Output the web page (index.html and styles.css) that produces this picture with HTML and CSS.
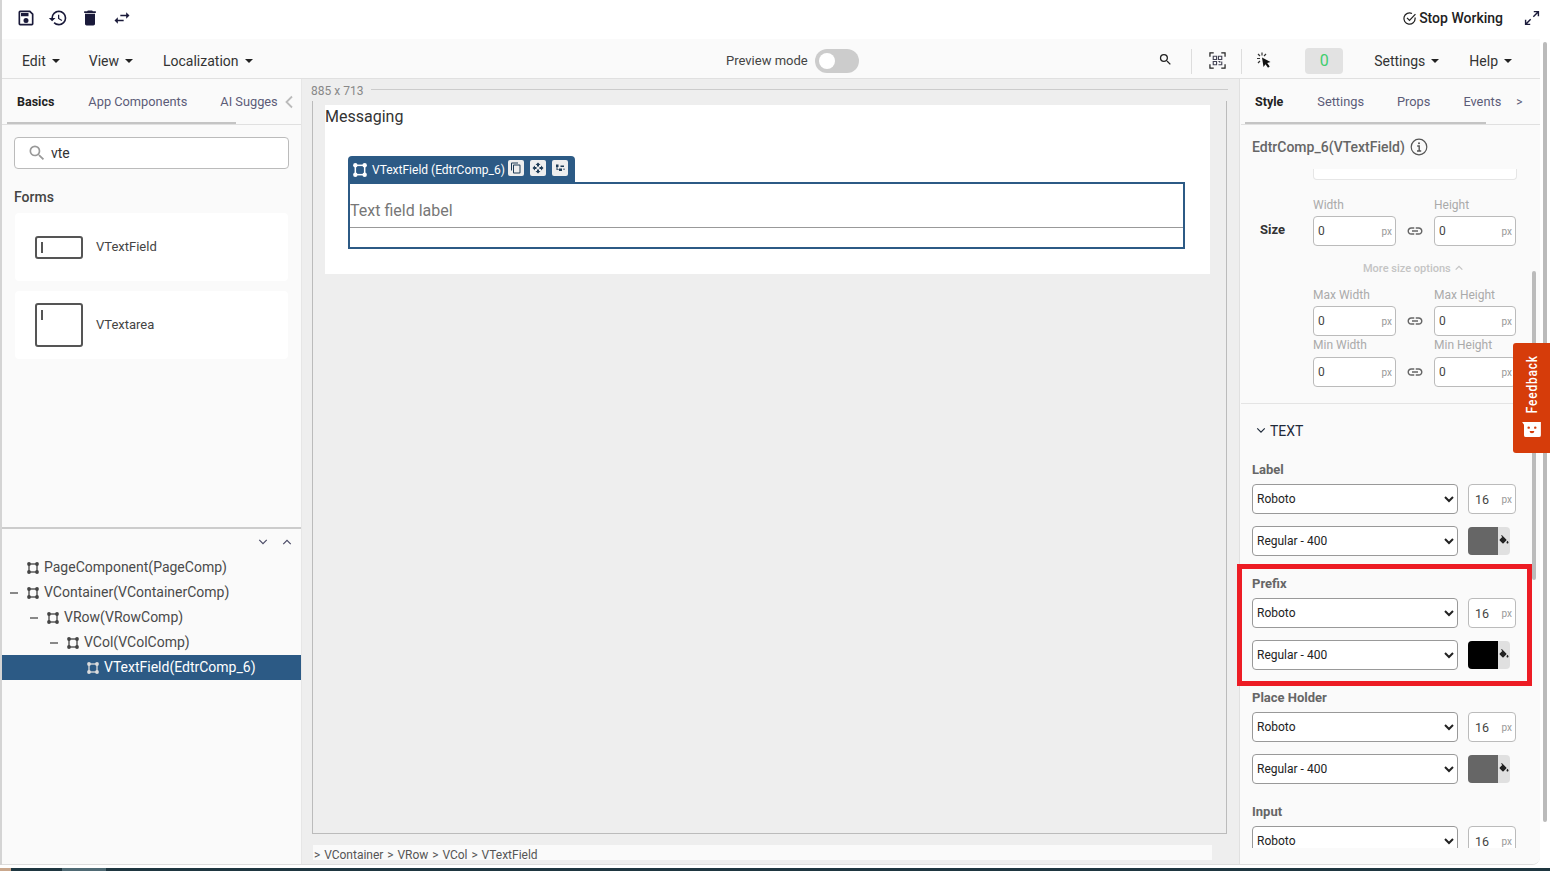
FILE: index.html
```html
<!DOCTYPE html>
<html lang="en">
<head>
  <meta charset="UTF-8" />
  <meta name="viewport" content="width=device-width, initial-scale=1.0"/>
  <title>Page Editor</title>
  <link rel="stylesheet" href="styles.css">
</head>
<body>
  <svg class="defs" width="0" height="0">
    <symbol id="i-node" viewBox="0 0 12 12">
      <rect x="2" y="2" width="8" height="8" fill="none" stroke="currentColor" stroke-width="1.300"/>
      <circle cx="2" cy="2" r="1.900" fill="currentColor"/>
      <circle cx="10" cy="2" r="1.900" fill="currentColor"/>
      <circle cx="2" cy="10" r="1.900" fill="currentColor"/>
      <circle cx="10" cy="10" r="1.900" fill="currentColor"/>
    </symbol>
    <symbol id="i-link" viewBox="0 0 24 24">
      <path fill="currentColor" d="M3.9 12c0-1.71 1.39-3.1 3.1-3.1h4V7H7c-2.76 0-5 2.24-5 5s2.24 5 5 5h4v-1.9H7c-1.71 0-3.1-1.39-3.1-3.1zM8 13h8v-2H8v2zm9-6h-4v1.9h4c1.71 0 3.1 1.39 3.1 3.1s-1.39 3.1-3.1 3.1h-4V17h4c2.76 0 5-2.24 5-5s-2.24-5-5-5z"/>
    </symbol>
    <symbol id="i-fill" viewBox="0 0 24 24">
      <path fill="currentColor" d="M16.56 8.94L7.62 0 6.21 1.41l2.38 2.38-5.15 5.15c-.59.59-.59 1.54 0 2.12l5.5 5.5c.29.29.68.44 1.06.44s.77-.15 1.06-.44l5.5-5.5c.59-.58.59-1.53 0-2.12zM19 11.5s-2 2.17-2 3.5c0 1.1.9 2 2 2s2-.9 2-2c0-1.33-2-3.5-2-3.5z"/>
    </symbol>
  </svg>

  <div class="app">
    <!-- Top actions -->
    <div class="topbar">
      <div class="top-icons">
        <svg viewBox="0 0 24 24"><path fill="currentColor" d="M17 3H5a2 2 0 0 0-2 2v14a2 2 0 0 0 2 2h14a2 2 0 0 0 2-2V7l-4-4zm2 16H5V5h11.17L19 7.83V19zm-7-7a3 3 0 1 0 0 6 3 3 0 0 0 0-6zM6 6h9v4H6z"/></svg>
        <svg viewBox="0 0 24 24"><path fill="currentColor" d="M13 3a9 9 0 0 0-9 9H1l3.89 3.89.07.14L9 12H6c0-3.87 3.13-7 7-7s7 3.13 7 7-3.13 7-7 7c-1.93 0-3.68-.79-4.94-2.06l-1.42 1.42A8.954 8.954 0 0 0 13 21a9 9 0 0 0 0-18zm-1 5v5l4.28 2.54.72-1.21-3.5-2.08V8H12z"/></svg>
        <svg viewBox="0 0 24 24"><path fill="currentColor" d="M6 19c0 1.1.9 2 2 2h8c1.1 0 2-.9 2-2V7H6v12zM19 4h-3.5l-1-1h-5l-1 1H5v2h14V4z"/></svg>
        <svg viewBox="0 0 24 24"><path fill="currentColor" d="M6.99 11L3 15l3.99 4v-3H14v-2H6.99v-3zM21 9l-3.99-4v3H10v2h7.01v3L21 9z"/></svg>
      </div>
      <div class="top-right">
        <svg class="check-icon" viewBox="0 0 24 24"><path fill="none" stroke="currentColor" stroke-width="2" d="M21 10.5V12a9 9 0 1 1-5-8"/><path fill="none" stroke="currentColor" stroke-width="2" d="M8 11l4 4 9.500-10"/></svg>
        <span class="stop-working">Stop Working</span>
        <svg class="expand-icon" viewBox="0 0 18 18"><path fill="none" stroke="currentColor" stroke-width="1.600" d="M10.500 7.500L16 2M11 1.800h5.200V7M7.500 10.500L2 16M7 16.200H1.800V11"/></svg>
      </div>
    </div>

    <!-- Menu -->
    <div class="menubar">
      <div class="menu-left">
        <span class="menu-item">Edit</span>
        <span class="menu-item">View</span>
        <span class="menu-item">Localization</span>
      </div>
      <div class="preview">
        <span>Preview mode</span>
        <div class="toggle"><div class="knob"></div></div>
      </div>
      <div class="menu-right">
        <svg class="tool-search" viewBox="0 0 24 24"><path fill="currentColor" d="M15.5 14h-.79l-.28-.27A6.471 6.471 0 0 0 16 9.500 6.500 6.500 0 1 0 9.500 16c1.610 0 3.090-.59 4.230-1.570l.27.28v.79l5 4.990L20.490 19l-4.990-5zm-6 0C7.010 14 5 11.990 5 9.500S7.010 5 9.500 5 14 7.010 14 9.500 11.990 14 9.500 14z"/></svg>
        <div class="tool-sep"></div>
        <svg class="tool-qr" viewBox="0 0 18 18">
          <path fill="none" stroke="#222" stroke-width="1.300" d="M1 5V1h4M13 1h4v4M17 13v4h-4M5 17H1v-4"/>
          <path fill="none" stroke="#445" stroke-width="1.200" d="M4.500 4.500h3.500v3.500H4.500zM10 4.500h3.500v3.500H10zM4.500 10h3.500v3.500H4.500zM10 10h1.500v1.500M13.500 10v3.500H10"/>
        </svg>
        <div class="tool-sep"></div>
        <svg class="tool-click" viewBox="0 0 14 16">
          <path fill="none" stroke="#333" stroke-width="1.200" d="M5 0.500v3M1 2l2 2M0 6.500h3M9 2L7 4M1 11l2-2"/>
          <path fill="#111" d="M5 5.500l8.500 4.500-3.300 1 2.500 3.500-1.700 1.300-2.500-3.500L6.500 15z"/>
        </svg>
        <div class="counter">0</div>
        <span class="menu-item">Settings</span>
        <span class="menu-item">Help</span>
      </div>
    </div>

    <div class="main">
      <!-- Component palette and tree -->
      <aside class="left-panel">
        <div class="palette">
          <div class="tabs">
            <span class="tab active">Basics</span>
            <span class="tab tab-app">App Components</span>
            <span class="tab tab-ai">AI Sugges</span>
            <svg class="tab-back" viewBox="0 0 10 14"><path fill="none" stroke="currentColor" stroke-width="1.800" d="M8 1.500L2.500 7 8 12.500"/></svg>
          </div>
          <div class="search">
            <svg viewBox="0 0 24 24"><path fill="currentColor" d="M15.5 14h-.79l-.28-.27A6.471 6.471 0 0 0 16 9.500 6.500 6.500 0 1 0 9.500 16c1.610 0 3.090-.59 4.230-1.570l.27.28v.79l5 4.990L20.490 19l-4.990-5zm-6 0C7.010 14 5 11.990 5 9.500S7.010 5 9.500 5 14 7.010 14 9.500 11.990 14 9.500 14z"/></svg>
            <span>vte</span>
          </div>
          <div class="group-title">Forms</div>
          <div class="comp-card">
            <div class="comp-icon small"></div>
            <span>VTextField</span>
          </div>
          <div class="comp-card">
            <div class="comp-icon tall"></div>
            <span>VTextarea</span>
          </div>
        </div>

        <div class="tree">
          <div class="tree-tools">
            <svg viewBox="0 0 12 8"><path fill="none" stroke="currentColor" stroke-width="1.400" d="M1.500 1.500L6 6l4.500-4.500"/></svg>
            <svg viewBox="0 0 12 8"><path fill="none" stroke="currentColor" stroke-width="1.400" d="M1.500 6.500L6 2l4.500 4.500"/></svg>
          </div>
          <div class="tree-row depth-0"><i class="minus none"></i><svg class="node"><use href="#i-node"/></svg><span>PageComponent(PageComp)</span></div>
          <div class="tree-row depth-0"><i class="minus"></i><svg class="node"><use href="#i-node"/></svg><span>VContainer(VContainerComp)</span></div>
          <div class="tree-row depth-1"><i class="minus"></i><svg class="node"><use href="#i-node"/></svg><span>VRow(VRowComp)</span></div>
          <div class="tree-row depth-2"><i class="minus"></i><svg class="node"><use href="#i-node"/></svg><span>VCol(VColComp)</span></div>
          <div class="tree-row depth-3 selected"><i class="minus none"></i><svg class="node"><use href="#i-node"/></svg><span>VTextField(EdtrComp_6)</span></div>
        </div>
      </aside>

      <!-- Canvas -->
      <section class="center">
        <div class="dims"><span>885 x 713</span><div class="dims-line"></div></div>
        <div class="frame">
          <div class="page">
            <div class="page-title">Messaging</div>
            <div class="sel-tab">
              <svg class="node"><use href="#i-node"/></svg>
              <span>VTextField (EdtrComp_6)</span>
              <div class="sel-btn"><svg viewBox="0 0 24 24"><path fill="currentColor" d="M16 1H4a2 2 0 0 0-2 2v14h2V3h12V1zm3 4H8a2 2 0 0 0-2 2v14a2 2 0 0 0 2 2h11a2 2 0 0 0 2-2V7a2 2 0 0 0-2-2zm0 16H8V7h11v14z"/></svg></div>
              <div class="sel-btn"><svg viewBox="0 0 24 24"><path fill="currentColor" d="M10 9h4V6h3l-5-5-5 5h3v3zm-1 1H6V7l-5 5 5 5v-3h3v-4zm14 2l-5-5v3h-3v4h3v3l5-5zm-9 3h-4v3H7l5 5 5-5h-3v-3z"/></svg></div>
              <div class="sel-btn"><svg viewBox="0 0 24 24"><path fill="currentColor" d="M4 5h5v5H7v5h3v-2h6v5h-6v-2H5V10H4zM13 7h7v3h-7zM19 13h2v3h-2z"/></svg></div>
            </div>
            <div class="sel-box">
              <div class="field-label">Text field label</div>
            </div>
          </div>
        </div>
        <div class="crumbs">&gt; VContainer &gt; VRow &gt; VCol &gt; VTextField</div>
      </section>

      <!-- Properties -->
      <aside class="right-panel">
        <div class="tabs right-tabs">
          <span class="tab active">Style</span>
          <span class="tab">Settings</span>
          <span class="tab">Props</span>
          <span class="tab">Events</span>
          <span class="tab tab-more">&gt;</span>
        </div>
        <div class="comp-title">
          <span>EdtrComp_6(VTextField)</span>
          <svg viewBox="0 0 18 18"><circle cx="9" cy="9" r="7.800" fill="none" stroke="currentColor" stroke-width="1.200"/><path fill="none" stroke="currentColor" stroke-width="1.400" d="M7.200 8h2v5M7 13h4.200"/><circle cx="9" cy="5.300" r="1" fill="currentColor"/></svg>
        </div>
        <div class="prop-scroll">
          <div class="cut-box"></div>

          <div class="size-labels first"><span>Width</span><span>Height</span></div>
          <div class="size-row">
            <span class="size-title">Size</span>
            <div class="num"><span>0</span><small>px</small></div>
            <svg class="link"><use href="#i-link"/></svg>
            <div class="num"><span>0</span><small>px</small></div>
          </div>
          <div class="more-size">More size options
            <svg viewBox="0 0 12 8"><path fill="none" stroke="currentColor" stroke-width="1.500" d="M2 6l4-4 4 4"/></svg>
          </div>
          <div class="size-labels"><span>Max Width</span><span>Max Height</span></div>
          <div class="size-row">
            <div class="num"><span>0</span><small>px</small></div>
            <svg class="link"><use href="#i-link"/></svg>
            <div class="num"><span>0</span><small>px</small></div>
          </div>
          <div class="size-labels min"><span>Min Width</span><span>Min Height</span></div>
          <div class="size-row">
            <div class="num"><span>0</span><small>px</small></div>
            <svg class="link"><use href="#i-link"/></svg>
            <div class="num"><span>0</span><small>px</small></div>
          </div>

          <div class="section-head">
            <svg viewBox="0 0 12 8"><path fill="none" stroke="currentColor" stroke-width="1.400" d="M1.500 1.500L6 6l4.500-4.500"/></svg>
            <span>TEXT</span>
          </div>

          <div class="font-group">
            <div class="font-label">Label</div>
            <div class="font-row">
              <select><option>Roboto</option></select>
              <div class="num short"><span>16</span><small>px</small></div>
            </div>
            <div class="font-row">
              <select><option>Regular - 400</option></select>
              <div class="swatch"><div class="chip grey"></div><svg><use href="#i-fill"/></svg></div>
            </div>
          </div>
          <div class="font-group">
            <div class="font-label">Prefix</div>
            <div class="font-row">
              <select><option>Roboto</option></select>
              <div class="num short"><span>16</span><small>px</small></div>
            </div>
            <div class="font-row">
              <select><option>Regular - 400</option></select>
              <div class="swatch"><div class="chip black"></div><svg><use href="#i-fill"/></svg></div>
            </div>
          </div>
          <div class="font-group">
            <div class="font-label">Place Holder</div>
            <div class="font-row">
              <select><option>Roboto</option></select>
              <div class="num short"><span>16</span><small>px</small></div>
            </div>
            <div class="font-row">
              <select><option>Regular - 400</option></select>
              <div class="swatch"><div class="chip grey"></div><svg><use href="#i-fill"/></svg></div>
            </div>
          </div>
          <div class="font-group">
            <div class="font-label">Input</div>
            <div class="font-row">
              <select><option>Roboto</option></select>
              <div class="num short"><span>16</span><small>px</small></div>
            </div>
          </div>
        </div>
      </aside>
    </div>
  </div>

  <div class="taskbar"><i class="tb-tan"></i><i class="tb-gap"></i><i class="tb-light"></i></div>

  <!-- Overlays -->
  <div class="inner-scroll"></div>
  <div class="outer-scroll"></div>
  <div class="highlight-box"></div>
  <div class="feedback">
    <span>Feedback</span>
    <svg viewBox="0 0 20 16"><path fill="#fff" d="M0 0h20v14a2 2 0 0 1-2 2H4a2 2 0 0 1-2-2V3z"/><circle cx="7" cy="6" r="1.300" fill="#d63c0a"/><circle cx="14" cy="6" r="1.300" fill="#d63c0a"/><path fill="#d63c0a" d="M8 9.500h5a2.500 2.500 0 0 1-5 0z"/></svg>
  </div>
</body>
</html>
```

FILE: styles.css
```css
* {
  box-sizing: border-box;
}

html, body {
  margin: 0;
  height: 871px;
  overflow: hidden;
}

body {
  background: #fff;
  font-family: Roboto, "Liberation Sans", sans-serif;
  color: #333;
  position: relative;
}

.defs {
  position: absolute;
}

.app {
  width: 1540px;
  height: 865px;
  border-left: 2px solid #d4d4d4;
  display: flex;
  flex-direction: column;
}

/* Top actions */
.topbar {
  height: 39px;
  display: flex;
  align-items: center;
  justify-content: space-between;
  background: #fff;
  padding-bottom: 3px;
}

.top-icons {
  display: flex;
  gap: 12px;
  padding-left: 14px;
  color: #1a1a3a;
}

.top-icons svg {
  width: 20px;
  height: 20px;
}

.top-right {
  display: flex;
  align-items: center;
}

.check-icon {
  width: 15px;
  height: 15px;
  color: #222;
  margin-right: 2px;
}

.stop-working {
  font-size: 14px;
  font-weight: 500;
  color: #222;
}

.expand-icon {
  width: 16px;
  height: 16px;
  color: #1a1a3a;
  margin-left: 21px;
}

/* Menu */
.menubar {
  height: 40px;
  background: #fafafa;
  border-bottom: 1px solid #e0e0e0;
  display: flex;
  align-items: center;
  padding: 4px 0 0 20px;
}

.menu-left {
  display: flex;
  width: 704px;
  gap: 27px;
}

.menu-left .menu-item + .menu-item {
  margin-left: 2px;
}

.menu-left .menu-item:last-child {
  margin-left: 3px;
}

.menu-item {
  font-size: 14px;
  color: #333;
  display: flex;
  align-items: center;
}

.menu-item::after {
  content: "";
  margin-left: 6px;
  border-left: 4.5px solid transparent;
  border-right: 4.5px solid transparent;
  border-top: 4.5px solid #222;
}

.preview {
  display: flex;
  align-items: center;
  gap: 7px;
  font-size: 13px;
  color: #444;
}

.toggle {
  width: 44px;
  height: 24px;
  border-radius: 12px;
  background: #ccc;
  padding: 4px 0 0 4px;
}

.knob {
  width: 16px;
  height: 16px;
  border-radius: 50%;
  background: #fff;
}

.menu-right {
  display: flex;
  align-items: center;
  margin-left: auto;
  padding-right: 28px;
}

.tool-search {
  width: 15px;
  height: 15px;
  color: #222;
  margin: -2px 3px 0 0;
}

.tool-sep {
  width: 1px;
  height: 25px;
  background: #ddd;
  margin: 1px 15px 0;
}

.tool-qr {
  width: 17px;
  height: 17px;
  margin: -1px 0 0 2px;
}

.tool-click {
  width: 14px;
  height: 16px;
  margin-top: -1px;
}

.counter {
  width: 38px;
  height: 26px;
  margin: 1px 31px 0 34px;
  border-radius: 4px;
  background: #e2e2e2;
  color: #3fce6e;
  font-size: 16px;
  line-height: 26px;
  text-align: center;
}

.menu-right .menu-item + .menu-item {
  margin-left: 30px;
}

/* Layout */
.main {
  flex: 1;
  display: flex;
  min-height: 0;
  border-bottom: 1px solid #ddd;
  border-bottom-right-radius: 8px;
  overflow: hidden;
}

.left-panel {
  width: 300px;
  background: #fafafa;
  border-right: 1px solid #e6e6e6;
  display: flex;
  flex-direction: column;
}

.center {
  width: 937px;
  background: #eee;
}

.right-panel {
  width: 301px;
  padding-left: 1px;
  background: #fafafa;
  border-left: 1px solid #e0e0e0;
  display: flex;
  flex-direction: column;
}

/* Tabs */
.tabs {
  height: 46px;
  display: flex;
  align-items: center;
  border-bottom: 1px solid #e0e0e0;
  position: relative;
  flex: none;
}

.tabs::after {
  content: "";
  position: absolute;
  left: 5px;
  bottom: 0;
  width: 229px;
  height: 2px;
  background: #c4c4c4;
}

.tab {
  font-size: 12.8px;
  color: #5c5c78;
}

.tab.active {
  font-weight: 700;
  color: #222;
  font-size: 12.5px;
}

.left-panel .tab.active {
  margin-left: 15px;
}

.tab-app {
  margin-left: 34px;
}

.tab-ai {
  margin-left: 33px;
}

.tab-back {
  width: 10px;
  height: 14px;
  color: #bbb;
  margin-left: 6px;
}

.right-tabs::after {
  left: 4px;
  width: 241px;
}

.right-tabs .tab.active {
  margin-left: 14px;
}

.right-tabs .tab + .tab {
  margin-left: 33px;
}

.right-tabs .tab.active + .tab {
  margin-left: 34px;
}

.right-tabs .tab.tab-more {
  margin-left: 15px;
  font-size: 12px;
}

/* Palette */
.palette {
  height: 450px;
  border-bottom: 2px solid #ccc;
  flex: none;
}

.search {
  height: 32px;
  margin: 12px 12px 0;
  width: 275px;
  background: #fff;
  border: 1px solid #bbb;
  border-radius: 4px;
  display: flex;
  align-items: center;
  padding-left: 12px;
  font-size: 14px;
  color: #333;
}

.search svg {
  width: 20px;
  height: 20px;
  color: #999;
  margin-right: 4px;
}

.group-title {
  margin: 20px 12px 8px;
  font-size: 14px;
  line-height: 16px;
  color: #444;
  font-weight: 500;
}

.comp-card {
  width: 273px;
  height: 68px;
  margin: 0 0 10px 13px;
  background: #fff;
  border-radius: 4px;
  display: flex;
  align-items: center;
  padding-left: 20px;
  font-size: 13px;
  color: #444;
}

.comp-card span {
  margin-bottom: 2px;
}

.comp-icon {
  width: 48px;
  border: 2px solid #555;
  border-radius: 3px;
  margin-right: 13px;
  position: relative;
}

.comp-icon::before {
  content: "";
  position: absolute;
  left: 4px;
  top: 5px;
  width: 2px;
  height: 10px;
  background: #555;
}

.comp-icon.small {
  height: 23px;
}

.comp-icon.small::before {
  top: 4px;
  height: 11px;
}

.comp-icon.tall {
  height: 44px;
}

/* Tree */
.tree-tools {
  height: 26px;
  display: flex;
  justify-content: flex-end;
  align-items: center;
  gap: 14px;
  padding-right: 9px;
  color: #4a4a66;
}

.tree-tools svg {
  width: 10px;
  height: 8px;
}

.tree-row {
  height: 25px;
  display: flex;
  align-items: center;
  font-size: 14px;
  color: #4a4a4a;
}

.tree-row span {
  margin-bottom: 1px;
}

.depth-0 { padding-left: 8px; }
.depth-1 { padding-left: 28px; }
.depth-2 { padding-left: 48px; }
.depth-3 { padding-left: 68px; }

.minus {
  width: 8px;
  height: 2px;
  margin: 0 8px 0 0;
  background: #888;
  flex: none;
}

.minus.none {
  background: none;
}

.node {
  width: 12px;
  height: 12px;
  margin: 0 5px 0 1px;
  flex: none;
  color: #444;
}

.tree-row.selected {
  background: #2c5a85;
  color: #fff;
}

.tree-row.selected .node {
  color: #ddd;
}

/* Canvas */
.dims {
  height: 22px;
  display: flex;
  align-items: center;
  padding: 1px 11px 0 9px;
  font-size: 12px;
  color: #888;
}

.dims-line {
  flex: 1;
  height: 1px;
  background: #ccc;
  margin: -3px 0 0 8px;
}

.frame {
  width: 915px;
  height: 733px;
  margin-left: 10px;
  border: 1px solid #bbb;
  border-top: 0;
  padding: 4px 0 0 12px;
}

.page {
  width: 885px;
  height: 169px;
  background: #fff;
  padding-top: 2px;
}

.page-title {
  font-size: 16px;
  line-height: 20px;
  color: #333;
}

.sel-tab {
  width: 227px;
  height: 27px;
  margin: 29px 0 0 23px;
  background: #2c5a85;
  border-radius: 4px 4px 0 0;
  display: flex;
  align-items: center;
  padding-left: 5px;
  color: #fff;
  font-size: 12px;
}

.sel-tab .node {
  width: 14px;
  height: 14px;
  margin: 0 5px 0 0;
  color: #fff;
}

.sel-btn {
  width: 16px;
  height: 16px;
  margin: -3px 6px 0 0;
  background: #eee;
  border-radius: 2px;
  color: #1d3a55;
  display: flex;
  align-items: center;
  justify-content: center;
}

.sel-tab span + .sel-btn {
  margin-left: 3px;
}

.sel-btn svg {
  width: 12px;
  height: 12px;
}

.sel-box {
  width: 837px;
  height: 67px;
  margin: -1px 0 0 23px;
  border: 2px solid #2c5a85;
  background: #fff;
  padding-top: 17px;
}

.field-label {
  height: 27px;
  border-bottom: 1px solid #999;
  font-size: 16px;
  line-height: 20px;
  color: #777;
}

.crumbs {
  height: 15px;
  width: 899px;
  margin: 11px 0 0 11px;
  padding-left: 1px;
  background: #fafafa;
  font-size: 12px;
  line-height: 20px;
  word-spacing: 0.9px;
  color: #555;
}

/* Properties */
.comp-title {
  height: 44px;
  flex: none;
  display: flex;
  align-items: center;
  padding-left: 11px;
  font-size: 14px;
  font-weight: 500;
  color: #666;
}

.comp-title svg {
  width: 18px;
  height: 18px;
  margin-left: 5px;
  color: #555;
}

.prop-scroll {
  height: 679px;
  flex: none;
  overflow: hidden;
}

.cut-box {
  width: 204px;
  height: 11px;
  margin-left: 72px;
  background: #fff;
  border: 1px solid #e6e6e6;
  border-top: 0;
  border-radius: 0 0 4px 4px;
}

.size-labels {
  display: flex;
  padding-left: 72px;
  margin-top: 11px;
  height: 16px;
  font-size: 12px;
  line-height: 16px;
  color: #aaa;
}

.size-labels span {
  width: 121px;
  flex: none;
}

.size-labels.first {
  margin-top: 17px;
}

.size-labels.min {
  margin-top: 1px;
}

.size-row {
  display: flex;
  align-items: center;
  padding-left: 72px;
  margin-top: 3px;
  position: relative;
  height: 30px;
}

.size-labels.min + .size-row {
  margin-top: 4px;
}

.size-title {
  position: absolute;
  left: 19px;
  top: 6px;
  font-size: 13px;
  font-weight: 700;
  color: #333;
}

.num {
  width: 83px;
  height: 30px;
  background: #fff;
  border: 1px solid #bbb;
  border-radius: 4px;
  display: flex;
  align-items: center;
  justify-content: space-between;
  padding: 0 3px 0 4px;
  font-size: 12px;
  color: #444;
  flex: none;
}

.size-row .num:last-child {
  width: 82px;
}

.num small {
  font-size: 10px;
  color: #999;
}

.link {
  width: 18px;
  height: 18px;
  margin: 0 10px;
  color: #666;
  flex: none;
}

.more-size {
  margin: 14px 0 0 122px;
  height: 16px;
  display: flex;
  align-items: center;
  font-size: 11px;
  font-weight: 500;
  color: #c4c4c4;
}

.more-size svg {
  width: 10px;
  height: 8px;
  margin-left: 3px;
}

.section-head {
  margin-top: 16px;
  height: 59px;
  padding: 0 0 5px 15px;
  border-top: 1px solid #e4e4e4;
  display: flex;
  align-items: center;
  font-size: 14px;
  color: #1f2a3a;
}

.section-head svg {
  width: 10px;
  height: 7px;
  margin-right: 4px;
}

.font-group {
  padding: 0 0 20px 11px;
}

.font-label {
  height: 16px;
  font-size: 13px;
  font-weight: 700;
  color: #666;
  line-height: 16px;
  margin-bottom: 6px;
}

.font-row {
  display: flex;
  gap: 10px;
  height: 30px;
}

.font-row + .font-row {
  margin-top: 12px;
}

.font-row select {
  width: 206px;
  height: 30px;
  background: #fff;
  border: 1px solid #999;
  border-radius: 4px;
  font-family: Roboto, "Liberation Sans", sans-serif;
  font-size: 12px;
  color: #222;
}

.num.short {
  width: 48px;
  padding: 0 3px 0 6px;
  font-size: 12.5px;
}

.swatch {
  width: 42px;
  height: 28px;
  margin-top: 1px;
  background: #e0e0e0;
  border-radius: 4px;
  display: flex;
  align-items: center;
  overflow: hidden;
}

.chip {
  width: 30px;
  height: 100%;
}

.chip.grey { background: #666; }
.chip.black { background: #000; }

.swatch svg {
  width: 12px;
  height: 12px;
  color: #222;
}

/* Bottom strip */
.taskbar {
  position: absolute;
  left: 0;
  right: 0;
  top: 868px;
  height: 3px;
  background: #1e3640;
  display: flex;
}

.tb-tan {
  width: 11px;
  background: #c9a78c;
}

.tb-gap {
  width: 51px;
}

.tb-light {
  width: 44px;
  background: #4f6a74;
}

/* Overlays */
.inner-scroll {
  position: absolute;
  left: 1532px;
  top: 271px;
  width: 4px;
  height: 309px;
  border-radius: 2px;
  background: #bbb;
}

.outer-scroll {
  position: absolute;
  left: 1543px;
  top: 42px;
  width: 4px;
  height: 780px;
  border-radius: 2px;
  background: #bbb;
}

.highlight-box {
  position: absolute;
  left: 1237px;
  top: 564px;
  width: 295px;
  height: 122px;
  border: 5px solid #ed1c24;
}

.feedback {
  position: absolute;
  left: 1513px;
  top: 343px;
  width: 37px;
  height: 110px;
  background: #d63c0a;
  border-radius: 3px 0 0 3px;
  display: flex;
  flex-direction: column;
  align-items: center;
  justify-content: flex-end;
  padding-bottom: 16px;
  color: #fff;
}

.feedback span {
  writing-mode: vertical-rl;
  transform: rotate(180deg) scaleY(0.85);
  font-size: 14px;
  font-weight: 500;
  letter-spacing: 1px;
  margin-bottom: 4px;
}

.feedback svg {
  width: 19px;
  height: 15px;
}
```
